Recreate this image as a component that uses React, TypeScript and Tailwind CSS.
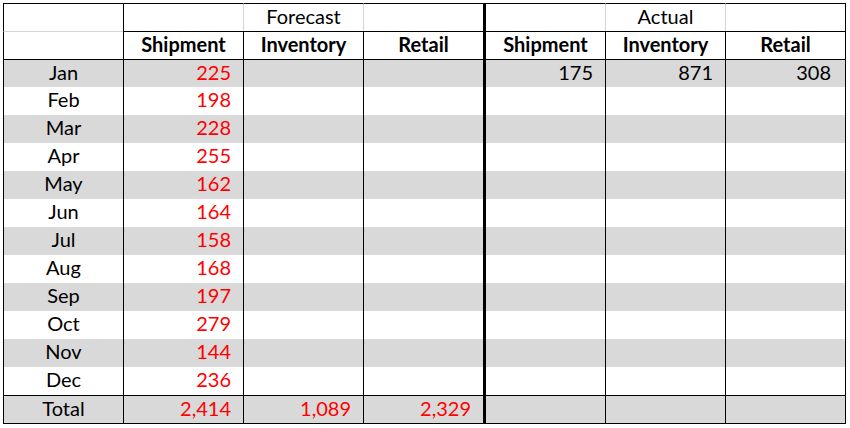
import React from "react";

type Row = {
  label: string;
  values: (string | null)[];
  total?: boolean;
};

const months = ["Jan", "Feb", "Mar", "Apr", "May", "Jun", "Jul", "Aug", "Sep", "Oct", "Nov", "Dec"];
const shipments = ["225", "198", "228", "255", "162", "164", "158", "168", "197", "279", "144", "236"];

const rows: Row[] = months.map((m, i) => ({
  label: m,
  values: [shipments[i], null, null, i === 0 ? "175" : null, i === 0 ? "871" : null, i === 0 ? "308" : null],
}));

const cols = "grid grid-cols-[120px_120px_120px_120px_122px_120px_120px]";

// left border per column: col 4 is the thick divider between Forecast and Actual
const leftBorder = (col: number, light: boolean) => {
  if (col === 0 || col === 1) return "border-l border-l-black";
  if (col === 4) return "border-l-[3px] border-l-black";
  return light ? "border-l border-l-[#d4d4d4]" : "border-l border-l-black";
};

export default function App() {
  return (
    <div className="min-h-screen w-[850px] h-[428px] bg-white pt-[3px] pl-[3px] font-['Lato',sans-serif] text-[20px] text-black">
      <div className="inline-block border-r border-b border-black">
        {/* ================= GROUP HEADER ================= */}
        <div className={`${cols} h-[28px]`}>
          {["", "", "Forecast", "", "", "Actual", ""].map((t, c) => (
            <div
              key={c}
              className={`${leftBorder(c, true)} border-t border-t-black flex items-center justify-center pb-1 leading-none`}
            >
              {t}
            </div>
          ))}
        </div>

        {/* ================= COLUMN HEADER ================= */}
        <div className={`${cols} h-[28px]`}>
          {["", "Shipment", "Inventory", "Retail", "Shipment", "Inventory", "Retail"].map((t, c) => (
            <div
              key={c}
              className={`${leftBorder(c, false)} border-t ${c === 0 ? "border-t-[#d4d4d4]" : "border-t-black"} flex items-center justify-center pb-1 font-bold leading-none`}
            >
              {t}
            </div>
          ))}
        </div>

        {/* ================= MONTHS ================= */}
        {rows.map((r, i) => (
          <div
            key={r.label}
            className={`${cols} h-[28px] ${i % 2 === 0 ? "bg-[#d9d9d9]" : "bg-white"} ${i === 0 ? "border-t border-black" : ""}`}
          >
            <div className={`${leftBorder(0, false)} flex items-center justify-center pb-1 leading-none`}>{r.label}</div>
            {r.values.map((v, c) => (
              <div
                key={c}
                className={`${leftBorder(c + 1, false)} flex items-center justify-end pb-1 ${c === 5 ? "pr-[14px]" : "pr-3"} leading-none ${c === 0 ? "text-[#ff0000]" : ""}`}
              >
                {v}
              </div>
            ))}
          </div>
        ))}

        {/* ================= TOTAL ================= */}
        <div className={`${cols} h-[28px] bg-[#d9d9d9] border-t border-black`}>
          <div className={`${leftBorder(0, false)} flex items-center justify-center pb-1 leading-none`}>Total</div>
          {["2,414", "1,089", "2,329", "", "", ""].map((v, c) => (
            <div
              key={c}
              className={`${leftBorder(c + 1, false)} flex items-center justify-end pb-1 pr-3 leading-none text-[#ff0000]`}
            >
              {v}
            </div>
          ))}
        </div>
      </div>
    </div>
  );
}
